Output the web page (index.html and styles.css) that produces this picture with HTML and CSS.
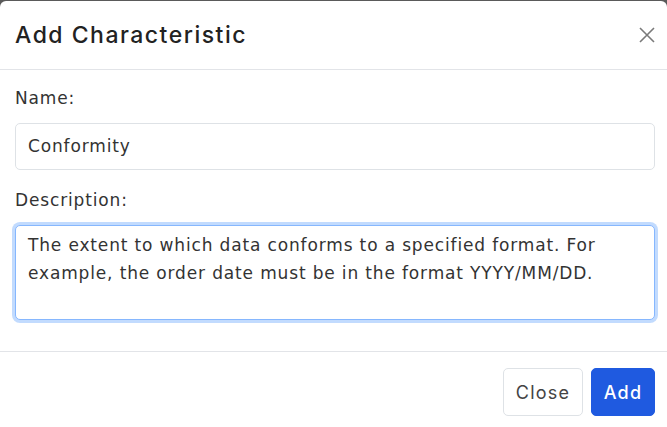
FILE: index.html
```html
<!DOCTYPE html>
<html lang="en">
<head>
    <meta charset="UTF-8">
    <meta name="viewport" content="width=device-width, initial-scale=1.0">
    <title>Add Characteristic</title>
    <link rel="stylesheet" href="styles.css">
</head>
<body>

    <!-- Modal dialog -->
    <div class="modal">
        <div class="modal-header">
            <h5 class="modal-title">Add Characteristic</h5>
            <button class="btn-close" aria-label="Close">
                <svg width="16" height="16" viewBox="0 0 16 16">
                    <path d="M1 1L15 15M15 1L1 15" stroke="#7a7a7a" stroke-width="1.6" fill="none"/>
                </svg>
            </button>
        </div>

        <div class="modal-body">
            <div class="form-group">
                <label for="char-name">Name:</label>
                <input type="text" id="char-name" class="form-control" value="Conformity">
            </div>
            <div class="form-group">
                <label for="char-desc">Description:</label>
                <textarea id="char-desc" class="form-control focused" rows="3">The extent to which data conforms to a specified format. For example, the order date must be in the format YYYY/MM/DD.</textarea>
            </div>
        </div>

        <div class="modal-footer">
            <button class="btn btn-light">Close</button>
            <button class="btn btn-primary">Add</button>
        </div>
    </div>

</body>
</html>
```

FILE: styles.css
```css
body {
    margin: 0;
    padding: 1px 0 0 0;
    background-color: #5a5a5a;
    font-family: "DejaVu Sans", "Inter", sans-serif;
    color: #333;
    height: 100vh;
    box-sizing: border-box;
    overflow: hidden;
}
/* Dialog box */
.modal {
    background-color: #fff;
    border-radius: 6px 6px 0 0;
    height: 100%;
}
.modal-header {
    display: flex;
    align-items: center;
    justify-content: space-between;
    height: 69px;
    padding: 0 12px 0 15px;
    border-bottom: 1px solid #e2e4e8;
    box-sizing: border-box;
}
.modal-title {
    margin: 0;
    font-family: "Inter", sans-serif;
    font-size: 23px;
    font-weight: 500;
    letter-spacing: 1.5px;
    color: #222;
}
.btn-close {
    background: none;
    border: none;
    padding: 0;
    width: 16px;
    height: 16px;
    cursor: pointer;
    display: flex;
}
/* Form */
.modal-body {
    padding: 16px 12px 31px 15px;
    border-bottom: 1px solid #e2e4e8;
}
.form-group {
    margin-bottom: 18px;
}
.form-group:last-child {
    margin-bottom: 0;
}
label {
    display: block;
    font-size: 17px;
    letter-spacing: 0.85px;
    line-height: 24px;
    margin-bottom: 13px;
    color: #333;
}
.form-control {
    display: block;
    width: 100%;
    box-sizing: border-box;
    font-family: inherit;
    font-size: 17px;
    letter-spacing: 0.85px;
    color: #333;
    border: 1px solid #dee2e6;
    border-radius: 5px;
    padding: 11px 12px;
    line-height: 23px;
    background-color: #fff;
}
textarea.form-control {
    height: 95px;
    resize: none;
    padding: 5px 12px;
    line-height: 28px;
    outline: none;
}
.focused {
    border-color: #86b7fe;
    box-shadow: 0 0 0 3px rgba(13, 110, 253, 0.25);
}
/* Footer buttons */
.modal-footer {
    display: flex;
    justify-content: flex-end;
    gap: 8px;
    padding: 16px 12px 16px 15px;
}
.btn {
    font-family: "Inter", sans-serif;
    font-size: 18px;
    letter-spacing: 1.2px;
    height: 48px;
    padding: 0;
    border-radius: 5px;
    cursor: pointer;
}
.btn-light {
    background-color: #fff;
    border: 1px solid #dee2e6;
    color: #444;
    width: 80px;
}
.btn-primary {
    background-color: #1f5ae0;
    border: 1px solid #1f5ae0;
    color: #fff;
    font-weight: 500;
    width: 64px;
}
```
